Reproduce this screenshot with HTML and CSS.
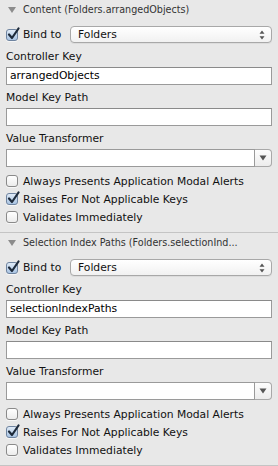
FILE: index.html
```html
<!DOCTYPE html>
<html>
<head>
<meta charset="utf-8">
<link rel="stylesheet" href="styles.css">
</head>
<body>
<div class="panel">
  <section class="section">
    <div class="header"><span class="tri"></span><span class="title">Content (Folders.arrangedObjects)</span></div>
    <div class="bind-row">
      <span class="check checked"><svg class="mark" viewBox="0 0 14 14" width="14" height="14"><path d="M3 7.5 L6 11 L12.5 1.5" fill="none" stroke="#1d2a3a" stroke-width="2.2" stroke-linecap="round" stroke-linejoin="round"/></svg></span>
      <span class="bind-text">Bind to</span>
      <div class="popup"><span>Folders</span><svg class="updown" viewBox="0 0 6 10" width="6" height="10"><path d="M3 0.5 L5.5 3.8 H0.5 Z M3 9.5 L5.5 6.2 H0.5 Z" fill="#555"/></svg></div>
    </div>
    <div class="label">Controller Key</div>
    <div class="field">arrangedObjects</div>
    <div class="label">Model Key Path</div>
    <div class="field"></div>
    <div class="label">Value Transformer</div>
    <div class="combo"><div class="combo-text"></div><div class="combo-btn"><svg viewBox="0 0 8 6" width="8" height="6"><path d="M0.5 0.5 H7.5 L4 5.5 Z" fill="#555"/></svg></div></div>
    <div class="checks">
      <div class="check-row"><span class="check"></span><span>Always Presents Application Modal Alerts</span></div>
      <div class="check-row"><span class="check checked"><svg class="mark" viewBox="0 0 14 14" width="14" height="14"><path d="M3 7.5 L6 11 L12.5 1.5" fill="none" stroke="#1d2a3a" stroke-width="2.2" stroke-linecap="round" stroke-linejoin="round"/></svg></span><span>Raises For Not Applicable Keys</span></div>
      <div class="check-row"><span class="check"></span><span>Validates Immediately</span></div>
    </div>
  </section>
  <section class="section">
    <div class="header"><span class="tri"></span><span class="title">Selection Index Paths (Folders.selectionInd...</span></div>
    <div class="bind-row">
      <span class="check checked"><svg class="mark" viewBox="0 0 14 14" width="14" height="14"><path d="M3 7.5 L6 11 L12.5 1.5" fill="none" stroke="#1d2a3a" stroke-width="2.2" stroke-linecap="round" stroke-linejoin="round"/></svg></span>
      <span class="bind-text">Bind to</span>
      <div class="popup"><span>Folders</span><svg class="updown" viewBox="0 0 6 10" width="6" height="10"><path d="M3 0.5 L5.5 3.8 H0.5 Z M3 9.5 L5.5 6.2 H0.5 Z" fill="#555"/></svg></div>
    </div>
    <div class="label">Controller Key</div>
    <div class="field">selectionIndexPaths</div>
    <div class="label">Model Key Path</div>
    <div class="field"></div>
    <div class="label">Value Transformer</div>
    <div class="combo"><div class="combo-text"></div><div class="combo-btn"><svg viewBox="0 0 8 6" width="8" height="6"><path d="M0.5 0.5 H7.5 L4 5.5 Z" fill="#555"/></svg></div></div>
    <div class="checks">
      <div class="check-row"><span class="check"></span><span>Always Presents Application Modal Alerts</span></div>
      <div class="check-row"><span class="check checked"><svg class="mark" viewBox="0 0 14 14" width="14" height="14"><path d="M3 7.5 L6 11 L12.5 1.5" fill="none" stroke="#1d2a3a" stroke-width="2.2" stroke-linecap="round" stroke-linejoin="round"/></svg></span><span>Raises For Not Applicable Keys</span></div>
      <div class="check-row"><span class="check"></span><span>Validates Immediately</span></div>
    </div>
  </section>
</div>
</body>
</html>
```
FILE: styles.css
```css
* { box-sizing: border-box; }
html, body { margin: 0; padding: 0; }
body {
  background: #e8e8e8;
  font-family: "DejaVu Sans", "Liberation Sans", sans-serif;
  font-size: 10.75px;
  color: #111;
  width: 278px;
  height: 466px;
  overflow: hidden;
}
.panel { display: flex; flex-direction: column; }
.section {
  display: flex;
  flex-direction: column;
  padding: 0 6px 6px 6px;
  border-bottom: 1px solid #c4c4c4;
}
.header {
  height: 19px;
  display: flex;
  align-items: center;
  margin-left: -6px;
  padding-left: 8px;
  color: #333;
  font-size: 9.6px;
  white-space: nowrap;
}
.tri {
  width: 0; height: 0;
  border-left: 4px solid transparent;
  border-right: 4px solid transparent;
  border-top: 6px solid #8c8c8c;
  margin-right: 7px;
}
.bind-row {
  margin-top: 7px;
  height: 17px;
  display: flex;
  align-items: center;
}
.bind-text { margin-left: 5px; width: 47px; }
.check {
  position: relative;
  width: 12px; height: 12px;
  border: 1px solid #8a8a8a;
  border-radius: 3px;
  background: linear-gradient(#ffffff, #ececec);
  flex: none;
  box-shadow: 0 1px 0 rgba(255,255,255,0.6);
}
.check.checked {
  background: linear-gradient(#dfeaf6, #a9c4e3);
  border-color: #6f84a0;
}
.mark { position: absolute; left: -1px; top: -3px; }
.popup {
  flex: 1;
  height: 17px;
  border: 1px solid #a8a8a8;
  border-radius: 4px;
  background: linear-gradient(#ffffff, #f1f1f1);
  display: flex;
  align-items: center;
  justify-content: space-between;
  padding: 0 6px 0 7px;
  box-shadow: 0 1px 0 rgba(0,0,0,0.05);
}
.label { margin-top: 7px; height: 14px; line-height: 14px; }
.field {
  margin-top: 3px;
  height: 18px;
  background: #fff;
  border: 1px solid #9a9a9a;
  border-top-color: #8a8a8a;
  padding: 0 3px;
  line-height: 16px;
  color: #000;
}
.field + .label, .combo + .label { margin-top: 6px; }
.combo {
  margin-top: 3px;
  height: 18px;
  display: flex;
}
.combo-text {
  flex: 1;
  background: #fff;
  border: 1px solid #9a9a9a;
}
.combo-btn {
  width: 17px;
  border: 1px solid #a8a8a8;
  border-left: none;
  border-radius: 0 4px 4px 0;
  background: linear-gradient(#fdfdfd, #ececec);
  display: flex;
  align-items: center;
  justify-content: center;
}
.checks { margin-top: 5px; display: flex; flex-direction: column; }
.check-row {
  height: 18px;
  display: flex;
  align-items: center;
  white-space: nowrap;
}
.check-row .check { margin-right: 5px; }
```
